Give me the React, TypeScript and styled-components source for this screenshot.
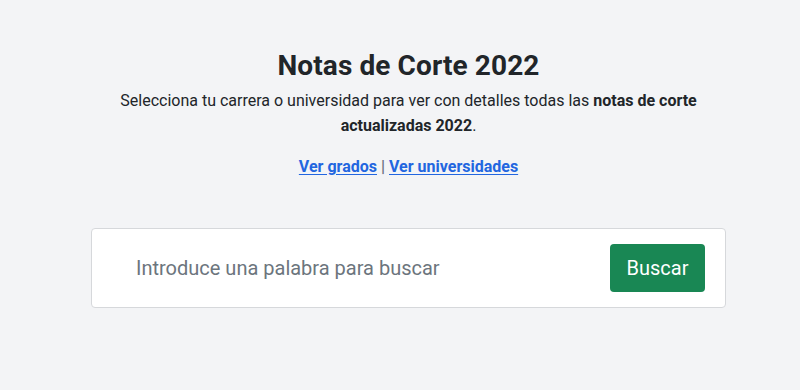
import React from "react";
import styled, { createGlobalStyle } from "styled-components";

const Global = createGlobalStyle`
  html, body { margin: 0; padding: 0; background: #f3f4f6; }
  body { font-family: Roboto, "Liberation Sans", sans-serif; color: #212529; }
`;

const Page = styled.main`
  width: 800px;
  height: 390px;
  box-sizing: border-box;
  padding: 47px 74px 0 91px;
  display: flex;
  flex-direction: column;
  align-items: center;
`;

const Title = styled.h1`
  margin: 0;
  font-family: Roboto, "Liberation Sans", sans-serif;
  font-weight: 700;
  font-size: 28px;
  line-height: 38px;
  color: #212529;
  letter-spacing: 0.1px;
`;

const Lead = styled.p`
  margin: 3px 0 0;
  font-size: 16px;
  line-height: 25px;
  text-align: center;
  width: 600px;
  b { font-weight: 700; }
`;

const Links = styled.p`
  margin: 17px 0 0;
  font-size: 16px;
  line-height: 24px;
  font-weight: 700;
  color: #6b7280;
`;

const Link = styled.a`
  color: #2266e0;
  text-decoration: underline;
  text-underline-offset: 2px;
`;

const Card = styled.form`
  margin-top: 49px;
  align-self: stretch;
  height: 80px;
  box-sizing: border-box;
  background: #fff;
  border: 1px solid #d6d8db;
  border-radius: 4px;
  display: flex;
  align-items: center;
  padding: 0 20px 0 42px;
  gap: 16px;
`;

const Input = styled.input`
  flex: 1;
  border: none;
  outline: none;
  background: transparent;
  font-family: Roboto, "Liberation Sans", sans-serif;
  font-size: 20px;
  color: #212529;
  &::placeholder { color: #6c757d; }
`;

const Button = styled.button`
  width: 95px;
  height: 48px;
  border: none;
  border-radius: 4px;
  background: #198754;
  color: #fff;
  font-family: Roboto, "Liberation Sans", sans-serif;
  font-size: 20px;
  cursor: pointer;
`;

export default function App() {
  return (
    <>
      <Global />
      <Page>
        <Title>Notas de Corte 2022</Title>
        <Lead>
          Selecciona tu carrera o universidad para ver con detalles todas las <b>notas de corte actualizadas 2022</b>.
        </Lead>
        <Links>
          <Link href="#">Ver grados</Link> | <Link href="#">Ver universidades</Link>
        </Links>
        <Card onSubmit={(e) => e.preventDefault()}>
          <Input placeholder="Introduce una palabra para buscar" />
          <Button type="submit">Buscar</Button>
        </Card>
      </Page>
    </>
  );
}
